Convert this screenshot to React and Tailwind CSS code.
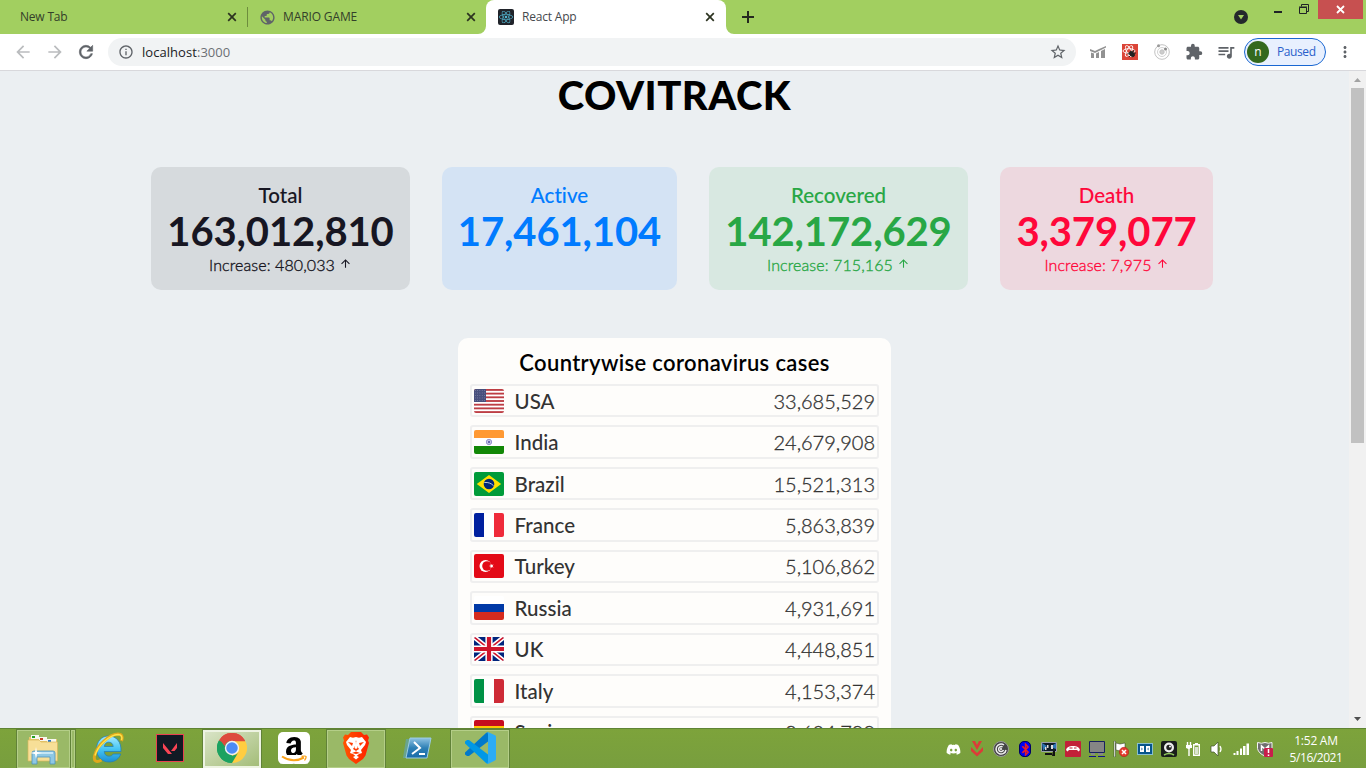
import React from "react";
import {
  MdArrowBack, MdArrowForward, MdInfoOutline, MdStarBorder, MdExtension,
  MdQueueMusic, MdMoreVert, MdPublic, MdArrowUpward,
} from "react-icons/md";
import { FaReact, FaDiscord, FaAmazon, FaBluetoothB } from "react-icons/fa";

/* ---------- browser chrome ---------- */

function TabClose() {
  return (
    <svg className="size-[14px] text-[#2c3320]" viewBox="0 0 14 14">
      <path d="M3.200 3.200l7.600 7.600M10.800 3.200l-7.600 7.600" stroke="currentColor" strokeWidth="1.700" />
    </svg>
  );
}

function TabStrip() {
  return (
    <div className="flex h-[34px] w-full bg-[#a2cf60] text-[12px] leading-[34px] text-[#33402a]">
      <div className="flex w-[247px] items-center justify-between pl-5 pr-2">
        <span className="tracking-[-0.2px]">New Tab</span>
        <TabClose />
      </div>
      <div className="mt-[7px] h-5 w-px bg-[#6d8d3d]" />
      <div className="flex w-[238px] items-center pl-[11px] pr-2">
        <MdPublic className="size-[17px] text-[#5f6368]" />
        <span className="ml-[7px] flex-1 tracking-[-0.12px]">MARIO GAME</span>
        <TabClose />
      </div>
      <div className="relative flex w-[240px] items-center rounded-t-lg bg-white pl-3 pr-[9px] text-[#45494d]">
        <svg className="absolute bottom-0 -left-2 size-2" viewBox="0 0 8 8"><path d="M8 0v8H0a8 8 0 0 0 8-8z" fill="#fff" /></svg>
        <svg className="absolute bottom-0 -right-2 size-2" viewBox="0 0 8 8"><path d="M0 0v8h8a8 8 0 0 1-8-8z" fill="#fff" /></svg>
        <span className="flex size-4 items-center justify-center rounded-[2px] bg-[#20232a]">
          <FaReact className="size-[14px] text-[#53b8d3]" />
        </span>
        <span className="ml-2 flex-1 tracking-[-0.2px]">React App</span>
        <TabClose />
      </div>
      <div className="flex w-[44px] items-center justify-center">
        <svg className="size-[12px]" viewBox="0 0 12 12"><path d="M6 0v12M0 6h12" stroke="#25291f" strokeWidth="2" /></svg>
      </div>
      <div className="flex flex-1 justify-end">
        <svg className="mt-[9px] mr-[25px] size-4" viewBox="0 0 16 16">
          <circle cx="8" cy="8" r="7" fill="#24282c" /><path d="M5 6h6l-3 4.500z" fill="#a2cf60" />
        </svg>
        <svg className="mt-[3px] mr-[8px] h-[14px] w-[36px]" viewBox="0 0 36 14" fill="none" stroke="#1f2326">
          <path d="M0 9h8" strokeWidth="2" />
          <path d="M25.500 4.500h7v6h-7zM25 4h8" /><path d="M27.500 3.500v-2h7v7h-1.500" />
        </svg>
        <div className="mr-[3px] flex h-[19px] w-[45px] items-center justify-center bg-[#c75050]">
          <svg className="size-[9px]" viewBox="0 0 9 9"><path d="M1 1l7 7M8 1L1 8" stroke="#fff" strokeWidth="1.800" /></svg>
        </div>
      </div>
    </div>
  );
}

function Toolbar() {
  return (
    <div className="flex h-[37px] w-full items-center border-b border-[#d8d8dc] bg-white text-[#5f6368]">
      <div className="flex w-[108px] items-center pl-[13px]">
        <MdArrowBack className="size-[20px] text-[#babcbe]" />
        <MdArrowForward className="ml-[12px] size-[20px] text-[#babcbe]" />
        <svg className="ml-[11px] size-[20px]" viewBox="0 0 24 24">
          <path d="M17.650 6.350A7.958 7.958 0 0 0 12 4c-4.420 0-7.990 3.580-7.990 8s3.570 8 7.990 8c3.730 0 6.840-2.550 7.730-6h-2.080A5.990 5.990 0 0 1 12 18c-3.310 0-6-2.690-6-6s2.690-6 6-6c1.660 0 3.140.69 4.220 1.780L13 11h7V4l-2.350 2.350z" fill="currentColor" stroke="currentColor" strokeWidth="0.700" />
        </svg>
      </div>
      <div className="flex h-7 w-[968px] items-center rounded-full bg-[#f1f3f4] pl-[10px] pr-[9px]">
        <MdInfoOutline className="size-4" />
        <span className="ml-2 flex-1 text-[13px] leading-4 tracking-[0.050px] text-[#6c7075]">
          <span className="text-[#202124]">localhost</span>:3000
        </span>
        <MdStarBorder className="size-[18px]" />
      </div>
      <svg className="ml-[14px] size-4" viewBox="0 0 16 16" fill="#929292">
        <path d="M0 5l5 2 4-2 7-3v1.500L9 7 5 9 0 7zM1 8.500l3 1V14H1zM6 9.500l3-1.500v6H6zM11 7l4-2v9h-4z" />
      </svg>
      <span className="ml-4 flex size-4 items-center justify-center bg-[#db4437]">
        <svg className="size-4" viewBox="0 0 16 16" fill="none" stroke="#fff" strokeWidth="0.900">
          <ellipse cx="7" cy="7" rx="6" ry="2.300" />
          <ellipse cx="7" cy="7" rx="6" ry="2.300" transform="rotate(60 7 7)" />
          <ellipse cx="7" cy="7" rx="6" ry="2.300" transform="rotate(120 7 7)" />
          <ellipse cx="10" cy="10" rx="2" ry="3" fill="#222" stroke="#222" transform="rotate(-40 10 10)" />
          <path d="M5.500 9.500l3 1M7 13l2-2M12 6l-1 2M14 9l-3 .5" stroke="#222" />
        </svg>
      </span>
      <svg className="ml-4 size-4" viewBox="0 0 16 16" fill="none" stroke="#c2c2c2">
        <circle cx="8" cy="8" r="7.300" /><circle cx="8" cy="8" r="4.500" stroke="#d2d2d2" /><circle cx="8" cy="8" r="2.200" fill="#ccc" />
        <circle cx="4.500" cy="1.800" r="1.500" fill="#999" stroke="none" /><circle cx="11.500" cy="5" r="1.500" fill="#888" stroke="none" />
      </svg>
      <MdExtension className="ml-[15px] size-[18px]" />
      <MdQueueMusic className="ml-[13px] size-[20px]" />
      <div className="ml-[8px] flex h-7 w-[82px] items-center rounded-full border border-[#1967d2] bg-[#e8f0fe] pl-[2px]">
        <span className="flex size-[22px] items-center justify-center rounded-full bg-[#33691e] text-[12px] text-white">n</span>
        <span className="ml-2 text-[12px] tracking-[-0.4px] text-[#2a5fcb]">Paused</span>
      </div>
      <MdMoreVert className="ml-[10px] size-[18px]" />
    </div>
  );
}

/* ---------- tracker page ---------- */

function StatCard({ title, value, increase, className }) {
  return (
    <div className={"flex h-[123px] shrink-0 flex-col items-center rounded-[10px] pt-[15px] " + className}>
      <div className="text-[20.500px] font-medium leading-[26px] tracking-[0.050px] [font-variant-ligatures:none] [-webkit-text-stroke:0.1px]">{title}</div>
      <div className="text-[40px] font-bold leading-[46px] tracking-[-0.100px]">{value}</div>
      {increase && (
        <div className="flex items-center text-[16px] font-light leading-[21px] tracking-[0.100px] [-webkit-text-stroke:0.35px]">
          Increase: {increase}
          <MdArrowUpward className="mb-[3px] ml-[4px] size-[13px]" />
        </div>
      )}
    </div>
  );
}

function Stripes({ colors, vertical }) {
  return colors.map((c, i) =>
    vertical
      ? <rect key={i} x={i * 10} y="0" width="10" height="24" fill={c} />
      : <rect key={i} x="0" y={i * 8} width="30" height="8" fill={c} />
  );
}

const flags = {
  us: (
    <>
      <rect width="30" height="24" fill="#fff" />
      {[0, 1, 2, 3, 4, 5, 6].map((i) => <rect key={i} y={i * 3.69} width="30" height="1.850" fill="#bd3d44" />)}
      <rect width="12" height="13" fill="#484f7d" />
      {[0, 1, 2, 3, 4].map((r) => [0, 1, 2, 3, 4].map((c) => (
        <circle key={r + "-" + c} cx={1.3 + c * 2.3} cy={1.4 + r * 2.5} r="0.450" fill="#a9acc6" />
      )))}
    </>
  ),
  in: (
    <>
      <Stripes colors={["#ff9933", "#ffffff", "#128807"]} />
      <circle cx="15" cy="12" r="2.700" fill="#c5c5e5" stroke="#8f8fc8" strokeWidth="0.900" />
      <circle cx="15" cy="12" r="1" fill="#4a4aa0" />
    </>
  ),
  br: (
    <>
      <rect width="30" height="24" fill="#009b3a" />
      <path d="M15 3l12.200 9L15 21 2.800 12z" fill="#fedf00" />
      <circle cx="15" cy="12" r="5.300" fill="#002776" />
      <path d="M10.300 10.500c4-.4 7 .8 9.300 3.300" fill="none" stroke="#cfd8e4" strokeWidth="0.900" />
    </>
  ),
  fr: <Stripes vertical colors={["#00209f", "#ffffff", "#ef2b3b"]} />,
  tr: (
    <>
      <rect width="30" height="24" fill="#e30a17" />
      <circle cx="11.500" cy="12" r="6" fill="#fff" /><circle cx="13" cy="12" r="4.800" fill="#e30a17" />
      <path d="M14.800 12l1.800-.6.100-1.900 1.100 1.500 1.800-.6-1.100 1.600 1.100 1.600-1.800-.6-1.100 1.500-.100-1.900z" fill="#fff" />
    </>
  ),
  ru: <Stripes colors={["#ffffff", "#0039a6", "#d52b1e"]} />,
  gb: (
    <>
      <rect width="30" height="24" fill="#00247d" />
      <path d="M0 0l30 24M30 0L0 24" stroke="#fff" strokeWidth="4.800" />
      <path d="M0 0l30 24M30 0L0 24" stroke="#cf142b" strokeWidth="1.600" />
      <path d="M15 0v24M0 12h30" stroke="#fff" strokeWidth="7.200" />
      <path d="M15 0v24M0 12h30" stroke="#cf142b" strokeWidth="4.200" />
    </>
  ),
  it: <Stripes vertical colors={["#009246", "#ffffff", "#ce2b37"]} />,
  es: (
    <>
      <rect width="30" height="24" fill="#c60b1e" /><rect y="6" width="30" height="12" fill="#ffc400" />
    </>
  ),
};

const countries = [
  ["us", "USA", "33,685,529"],
  ["in", "India", "24,679,908"],
  ["br", "Brazil", "15,521,313"],
  ["fr", "France", "5,863,839"],
  ["tr", "Turkey", "5,106,862"],
  ["ru", "Russia", "4,931,691"],
  ["gb", "UK", "4,448,851"],
  ["it", "Italy", "4,153,374"],
  ["es", "Spain", "3,604,799"],
];

function CountryRow({ code, name, cases }) {
  return (
    <div className="flex h-[33.450px] shrink-0 items-center rounded-[3px] border-2 border-[#efefef] pl-[2px] pr-[2px] text-[20px] leading-[26px] text-[#333333]">
      <svg className="h-6 w-[30px] rounded-[2px]" viewBox="0 0 30 24" preserveAspectRatio="none">{flags[code]}</svg>
      <span className="ml-[10.500px] flex-1 text-[20.500px] font-medium tracking-[0.050px]">{name}</span>
      <span className="font-light [-webkit-text-stroke:0.3px]">{cases}</span>
    </div>
  );
}

function Page() {
  return (
    <div className="flex h-[657px] w-full overflow-hidden bg-[#ebeff2]">
      <div className="flex h-full w-[1349px] flex-col items-center font-['Lato',sans-serif]">
        <h1 className="h-12 text-[40px] font-black leading-[48px] tracking-[0.500px] text-black">COVITRACK</h1>
        <div className="mt-12 flex w-full shrink-0 gap-8 pl-[151px]">
          <StatCard title="Total" value="163,012,810" increase="480,033" className="w-[259px] bg-[#d6dadd] text-[#171622]" />
          <StatCard title="Active" value="17,461,104" className="w-[235px] bg-[#d4e3f4] text-[#007bff]" />
          <StatCard title="Recovered" value="142,172,629" increase="715,165" className="w-[259px] bg-[#d8e8e1] text-[#28a745]" />
          <StatCard title="Death" value="3,379,077" increase="7,975" className="w-[213px] bg-[#edd8df] text-[#ff073a]" />
        </div>
        <div className="mt-12 flex w-[433px] shrink-0 flex-col gap-2 rounded-[10px] bg-[#fefdfb] px-3 pt-3">
          <h2 className="h-[26px] text-center text-[22px] font-semibold leading-[26px] tracking-[0.350px] text-black">Countrywise coronavirus cases</h2>
          {countries.map(([code, name, cases]) => <CountryRow key={code} code={code} name={name} cases={cases} />)}
        </div>
      </div>
      <div className="flex w-[17px] flex-col items-center bg-[#f1f1f1]">
        <svg className="h-[17px] w-[17px] shrink-0" viewBox="0 0 17 17"><path d="M5 11h7L8.500 7z" fill="#a3a3a3" /></svg>
        <div className="h-[355px] w-[13px] bg-[#c1c1c1]" />
        <svg className="mt-auto h-[17px] w-[17px] shrink-0" viewBox="0 0 17 17"><path d="M5 6h7l-3.500 4z" fill="#505050" /></svg>
      </div>
    </div>
  );
}

/* ---------- taskbar ---------- */

const openApp = "border border-[#b4ce88] bg-[#9ab967] outline outline-[#618238]";

function TaskButton({ children, className = "" }) {
  return <div className={"flex h-[38px] w-[58px] shrink-0 items-center justify-center pb-px " + className}>{children}</div>;
}

function ExplorerIcon() {
  return (
    <svg className="h-8 w-8" viewBox="0 0 32 32">
      <path d="M2 4h9l1 2h18v22H2z" fill="#e8c76c" />
      <rect x="4" y="2" width="8" height="4" fill="#f8f8f0" /><rect x="5" y="3" width="3" height="2" fill="#23a023" />
      <rect x="12" y="4" width="8" height="4" fill="#f8f8f0" /><rect x="13" y="5" width="3" height="2" fill="#c8402a" />
      <rect x="20" y="6" width="9" height="4" fill="#f8f8f0" /><rect x="21" y="7" width="3" height="2" fill="#2979c8" />
      <path d="M1 7h11l2 2h16.500v19H1z" fill="#f7df97" stroke="#d9b75a" strokeWidth="0.700" />
      <path d="M5 31V20q0-2 2-2h19q2 0 2 2v11h-5v-7H10v7z" fill="#8fc8e4" stroke="#4f93bb" strokeWidth="0.800" />
      <path d="M7 20h19" stroke="#d8f0fa" strokeWidth="1.500" />
      <path d="M9 14l1 5 5 1-5 1-1 5-1-5-5-1 5-1z" fill="#fff" />
    </svg>
  );
}

function IEIcon() {
  return (
    <svg className="h-8 w-8" viewBox="0 0 32 32">
      <defs>
        <linearGradient id="ie" x1="0" y1="0" x2="0" y2="1"><stop offset="0" stopColor="#a5ebff" /><stop offset="0.500" stopColor="#46c5f3" /><stop offset="1" stopColor="#1c8fd2" /></linearGradient>
      </defs>
      <path d="M16.500 4C9.500 4 4.500 9.500 4.500 17S9.800 30 17 30c5.700 0 10-3 11.700-8h-7.500c-.9 1.500-2.200 2.200-4.200 2.200-2.900 0-4.600-1.700-4.800-4.700H29C29.600 10 24.500 4 16.500 4zM12.300 14.500c.4-2.800 2-4.300 4.500-4.300s4.100 1.500 4.400 4.300z" fill="url(#ie)" stroke="#2482b8" strokeWidth="0.800" />
      <path d="M29.500 9C31 5 30 2 26 2 18 2 5 13 2.500 24c-1 5 2 7 7 4" fill="none" stroke="#e0a91c" strokeWidth="3" />
      <path d="M29.500 8C30.500 5 29.500 2.500 26 2.500 18 3 6 13 3 23.500" fill="none" stroke="#ffe24a" strokeWidth="1.400" />
    </svg>
  );
}

function ValorantIcon() {
  return (
    <svg className="h-7 w-7" viewBox="0 0 28 28">
      <rect x="0.500" y="0.500" width="27" height="27" fill="#111a24" stroke="#e8424f" />
      <path d="M7 9v5l5 6h4zM21 9v5l-2.500 3H15z" fill="#fa4454" />
    </svg>
  );
}

function ChromeIcon() {
  return (
    <svg className="h-[30px] w-[30px]" viewBox="0 0 48 48">
      <path d="M24 24L3.200 12A24 24 0 0 1 44.800 12z" fill="#dd4b3e" />
      <path d="M24 24L44.800 12A24 24 0 0 1 24 48z" fill="#ffcd41" />
      <path d="M24 24v24A24 24 0 0 1 3.200 12z" fill="#1ca261" />
      <path d="M24 12h20.800L34.400 30 24 24z" fill="#ffcd41" />
      <path d="M3.200 12l10.400 18 10.400-6V13z" fill="#1ca261" />
      <path d="M3.200 12A24 24 0 0 1 44.800 12v1H24A12 12 0 0 0 12.500 21L7 14z" fill="#dd4b3e" />
      <path d="M13.600 30A12 12 0 0 0 34 31L24 48A24 24 0 0 1 3.200 12z" fill="#1ca261" />
      <circle cx="24" cy="24" r="11.500" fill="#f1f1f1" /><circle cx="24" cy="24" r="9.200" fill="#4c8bf5" />
    </svg>
  );
}

function BraveIcon() {
  return (
    <svg className="h-8 w-7" viewBox="0 0 28 32">
      <defs><linearGradient id="brave"><stop offset="0" stopColor="#ff5500" /><stop offset="1" stopColor="#ff2000" /></linearGradient></defs>
      <path d="M9 0h10l3 3 3-.500 2 3-1 3 1 2.500-3.500 12.500L21 27l-7 5-7-5-2.500-3.500L1 11l1-2.500-1-3 2-3 3 .500z" fill="url(#brave)" />
      <path d="M8 5l3 .7 3-.7 3 .700L20 5l4 5-1 3-4 5 1 3-3 1-3 2.500-3-2.500-3-1 1-3-4-5-1-3z" fill="#fff" />
      <path d="M6 10l5 1-1 3zM22 10l-5 1 1 3zM14 8l-1 6-2 3 3 2 3-2-2-3zM10 21l4-1.500 4 1.500-4 1z" fill="#ff3a00" />
      <path d="M13.300 10h1.400l.800 6-1.500 1-1.500-1z" fill="#fff" />
      <path d="M11 25l3-1.500 3 1.500-3 2.500z" fill="#fff" />
    </svg>
  );
}

function PowerShellIcon() {
  return (
    <svg className="h-6 w-8" viewBox="0 0 32 24">
      <defs><linearGradient id="ps" x1="0" y1="0" x2="0" y2="1"><stop offset="0" stopColor="#8fc3e3" /><stop offset="0.500" stopColor="#2d7fb5" /><stop offset="1" stopColor="#1a6ca8" /></linearGradient></defs>
      <path d="M4 3h24L23 22H1z" fill="#5da7c4" opacity="0.600" />
      <path d="M8 2h21l-4 20H4z" fill="url(#ps)" stroke="#9acbe4" />
      <path d="M12 6l6 6-8 6M17 18h6" fill="none" stroke="#fff" strokeWidth="2" />
    </svg>
  );
}

function CodeIcon() {
  return (
    <svg className="h-8 w-8" viewBox="0 0 32 32">
      <path d="M24 0l-2 1L1 20.500l0 2L3 24l2 0L24 9.500z" fill="#0079cb" />
      <path d="M24 32l-2-1L1 11.500l0-2L3 8l2 0 19 14.500z" fill="#0098e6" />
      <path d="M22 31c1 .800 2 1 3 .500l5.500-2.700c1-.5 1.500-1 1.500-2V5c0-1-.5-1.600-1.500-2L25 .500C24 0 23 .2 22 1c1.200-.5 2 0 2 1.500v27c0 1.500-.8 2-2 1.500z" fill="#2cacf4" />
    </svg>
  );
}

const tray = [
  <FaDiscord className="size-[15px] text-white" />,
  <svg className="size-4" viewBox="0 0 16 16"><path d="M3 0h3l2 4 2-4h3l-5 9z" fill="#dc3b38" /><path d="M2 6v4l6 5.500 6-5.500V6l-6 6z" fill="#dc3b38" /></svg>,
  <svg className="size-4" viewBox="0 0 16 16" fill="none"><circle cx="8" cy="8" r="7.500" fill="#454545" stroke="#999" /><path d="M13 9a5 5 0 1 1-2-5M10.500 9a2.500 2.500 0 1 1-1-3" stroke="#eee" strokeWidth="1.500" /><circle cx="8" cy="8" r="1" fill="#fff" /></svg>,
  <span className="flex h-4 w-3 items-center justify-center rounded-[5px] border border-[#000060] bg-[#0000f4]"><FaBluetoothB className="h-[13px] w-[9px] text-[#f32020]" stroke="#f32020" strokeWidth="20" /></span>,
  <svg className="size-4" viewBox="0 0 16 16"><path d="M.500 1.500h15v9H.500z" fill="#101a28" stroke="#9aa2a8" /><path d="M1 2l5 3-4 5zM9 6l6-4v6z" fill="#2f76b4" /><path d="M6 4h1.500v3H6zM10 4h2v4h-2zM4 6h1.500v3H4z" fill="#ddd" /><path d="M4 12h7v2H4zM12 10h2v5h-3z" fill="#111" /></svg>,
  <svg className="size-4" viewBox="0 0 16 16"><rect width="16" height="16" rx="1" fill="#c22138" /><path d="M1 9c1-3 3-4 7-4s6 1 7 4l-1.500 1.500L12 9H4l-1.500 1.500z" fill="#fff" /><path d="M4.500 7h3M9 7h2.500" stroke="#c22138" /></svg>,
  <svg className="size-4" viewBox="0 0 16 16"><path d="M.500.500h15v11H.500z" fill="#858585" stroke="#17205f" /><path d="M2 12h4v2H2zM9 12h5v2H9z" fill="#888" /><path d="M0 15.500h7M9 15.500h7" stroke="#10108a" /></svg>,
  <svg className="size-4" viewBox="0 0 16 16"><path d="M1 0h1.500v16H1zM3 2l4 1 5-1v8H7L3 9z" fill="#fff" stroke="#26361a" strokeWidth="0.500" /><circle cx="11" cy="11" r="4.700" fill="#e33b2d" stroke="#a71810" strokeWidth="0.500" /><path d="M9 9l4 4M13 9l-4 4" stroke="#fff" strokeWidth="1.500" /></svg>,
  <svg className="size-4" viewBox="0 0 16 16"><rect x="0.500" y="2.500" width="15" height="11" fill="#07558b" stroke="#88bfd0" /><path d="M3 5h4v6H3zM9 5h4v6H9z" fill="#fff" /><path d="M4.500 6.500q2 1.500 0 3zM11.500 6.500q-2 1.500 0 3z" fill="#07558b" /></svg>,
  <svg className="size-4" viewBox="0 0 16 16"><rect width="16" height="16" rx="2" fill="#191d1b" /><circle cx="8" cy="6.500" r="5" fill="#eee" /><circle cx="8" cy="6.500" r="2.700" fill="#222" /><circle cx="9" cy="5.500" r="1" fill="#fff" /><path d="M3 14q5-3 10 0" stroke="#8fc65c" strokeWidth="1.500" fill="none" /></svg>,
  <svg className="size-4" viewBox="0 0 16 16" fill="none" stroke="#fff"><path d="M2.500 1v3M5.500 1v3" strokeWidth="1.400" /><path d="M1 4h6v3H5.500L4.700 8v7H3.300V8L1 7z" fill="#fff" stroke="none" /><path d="M8.700 3.700h5.600v10.600H8.700z" strokeWidth="1.400" /><path d="M10 2.500h3" /><path d="M10 6h3v7h-3z" fill="#dbe4d0" stroke="none" /></svg>,
  <svg className="size-4" viewBox="0 0 16 16"><path d="M2 5h3l4-4v14l-4-4H2z" fill="#fff" stroke="#40522b" strokeWidth="0.700" /><path d="M11 5q2 3 0 6" stroke="#fff" strokeWidth="1.300" fill="none" /></svg>,
  <svg className="size-4" viewBox="0 0 16 16"><path d="M.500 12h2v2h-2zM3.500 10h2v4h-2zM7 7.500h2V14H7zM10 5h2.500v9H10zM13.500 2.500H16V14h-2.500z" fill="#fff" /></svg>,
  <svg className="size-4" viewBox="0 0 16 16"><path d="M.500 1.500q4 1.500 7.500 0 3.500 1.500 7 0v6q-1 5-7 7.500-6.500-2.500-7.500-7.500z" fill="#6f6f6f" stroke="#f4f4f4" /><path d="M4.500 10V5L8 8l3.500-3v4" fill="none" stroke="#fff" strokeWidth="1.500" /><rect x="7" y="7" width="9" height="9" rx="1" fill="#c81e4b" /><path d="M11.500 8v4M11.500 13.500V15" stroke="#fff" strokeWidth="1.500" /></svg>,
];

function Taskbar() {
  return (
    <div className="flex h-10 w-full items-center border-t border-[#5f8434] bg-linear-to-b from-[#7da33b] to-[#789e3e]">
      <div className="flex w-[941px] gap-1 pl-[17px]">
        <div className="flex h-[38px] w-[58px] shrink-0">
          <div className={"flex w-[53px] items-center justify-center pr-[2px] " + openApp}><ExplorerIcon /></div>
          <div className={"ml-px w-1 " + openApp} />
        </div>
        <TaskButton><IEIcon /></TaskButton>
        <TaskButton><ValorantIcon /></TaskButton>
        <TaskButton className="border-2 border-[#edf3e2] bg-linear-to-br from-[#d9e4c6] to-[#a4bd78] outline outline-[#618238]"><ChromeIcon /></TaskButton>
        <TaskButton>
          <span className="relative flex size-8 items-center justify-center rounded-[5px] bg-white">
            <FaAmazon className="mt-[3px] size-[30px] text-black" />
            <svg className="absolute bottom-0 left-0 h-[9px] w-8" viewBox="0 0 32 9">
              <rect x="2" y="0" width="28" height="8.500" fill="#fff" />
              <path d="M4 1.500q11 7 22 1" fill="none" stroke="#f9a11b" strokeWidth="2" />
              <path d="M23.500 1.500q4-1 4.500 0t-1.500 4" fill="none" stroke="#f9a11b" strokeWidth="1.300" />
            </svg>
          </span>
        </TaskButton>
        <TaskButton className={openApp}><BraveIcon /></TaskButton>
        <TaskButton><PowerShellIcon /></TaskButton>
        <TaskButton className={openApp}><CodeIcon /></TaskButton>
      </div>
      <div className="flex w-[336px] pt-px">
        {tray.map((icon, i) => <div key={i} className="flex w-6 justify-center items-center">{icon}</div>)}
      </div>
      <div className="w-[78px] text-center text-[12px] leading-[17px] text-white">
        <div className="tracking-[-0.250px]">1:52 AM</div>
        <div className="tracking-[-0.450px]">5/16/2021</div>
      </div>
    </div>
  );
}

export default function App() {
  return (
    <div className="flex h-[768px] w-[1366px] flex-col overflow-hidden font-['Open_Sans','Noto_Sans',sans-serif]">
      <TabStrip />
      <Toolbar />
      <Page />
      <Taskbar />
    </div>
  );
}
